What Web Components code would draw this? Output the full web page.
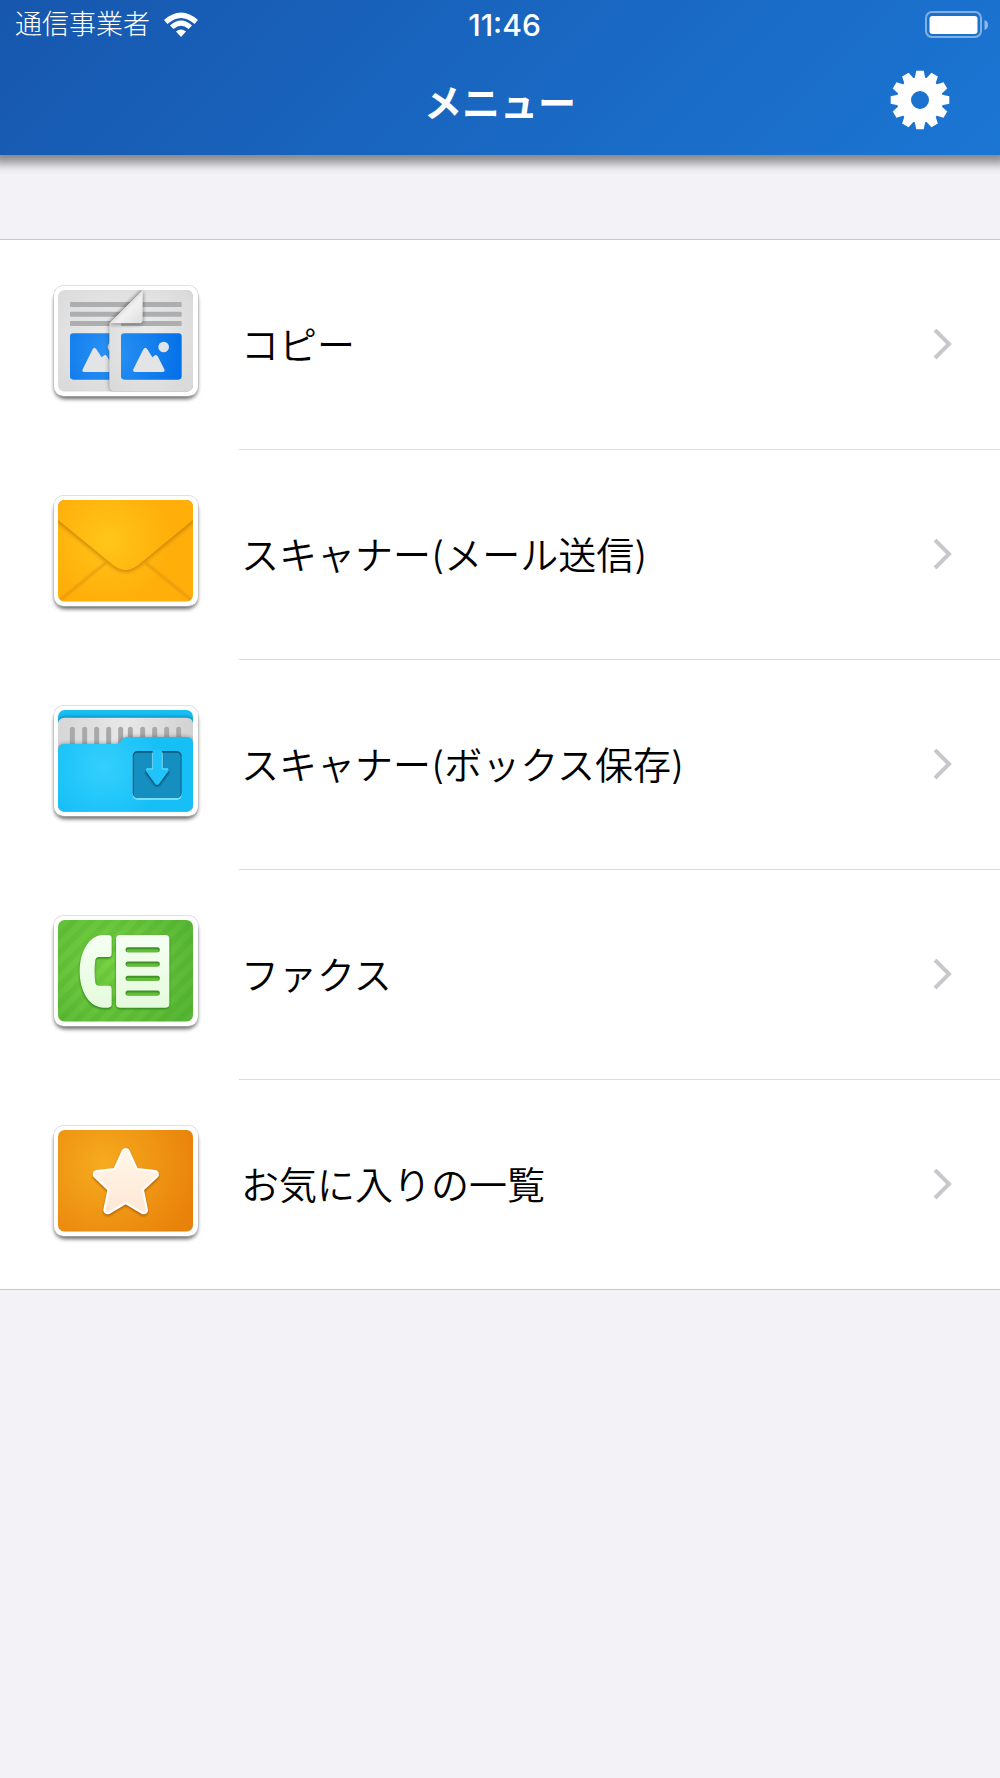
<!DOCTYPE html>
<html lang="ja">
<head>
<meta charset="utf-8">
<meta name="viewport" content="width=device-width, initial-scale=1">
<title>メニュー</title>
<style>
	body {
		margin: 0;
		min-height: 100vh;
		background: #f2f2f7;
		font-family: Inter, "Noto Sans CJK JP", sans-serif;
	}
</style>
</head>
<body>
<menu-app></menu-app>

<script>
// artwork of the tiles, drawn inside the 54,60 - 459,365 area
const ART = {
	copy: `
		<radialGradient id="paper" cx="45%" cy="45%" r="65%">
			<stop offset="0" stop-color="#ececec"/><stop offset="1" stop-color="#dadada"/>
		</radialGradient>
		<radialGradient id="blue" gradientUnits="userSpaceOnUse" cx="210" cy="250" r="220">
			<stop offset="0" stop-color="#2b94f5"/><stop offset="1" stop-color="#0470e8"/>
		</radialGradient>
		<linearGradient id="fold" x1="0" y1="0" x2="1" y2="1">
			<stop offset=".4" stop-color="#cfcfcf"/><stop offset=".6" stop-color="#f2f2f2"/><stop offset="1" stop-color="#dcdcdc"/>
		</linearGradient>
		<rect x="54" y="60" width="405" height="305" fill="url(#paper)"/>
		<g fill="#adaeb0">
			<rect x="90" y="96" width="200" height="15" rx="3"/>
			<rect x="90" y="125" width="200" height="15" rx="3"/>
			<rect x="90" y="153" width="200" height="15" rx="3"/>
		</g>
		<rect x="90" y="190" width="180" height="139" rx="10" fill="url(#blue)"/>
		<path d="M132 306 Q125 306 128 298 L158 238 Q163 229 169 238 L185 262 L193 256 Q198 253 202 260 L222 298 V306 Z" fill="#e3e4e6"/>
		<circle cx="219" cy="231" r="16" fill="#dfe4ea"/>
		<path d="M208 160 L308 60 H459 V365 H228 Q208 365 208 345 Z" fill="#222" filter="url(#soft)" opacity=".5"/>
		<path d="M208 160 L308 60 H459 V365 H228 Q208 365 208 345 Z" fill="url(#paper)"/>
		<g fill="#adaeb0">
			<rect x="300" y="96" width="125" height="15" rx="3"/>
			<rect x="300" y="125" width="125" height="15" rx="3"/>
			<rect x="243" y="153" width="182" height="15" rx="3"/>
		</g>
		<path d="M308 64 V151 Q308 162 297 162 H208 Z" fill="#222" filter="url(#soft)" opacity=".6"/>
		<path d="M308 60 V149 Q308 160 297 160 H208 Z" fill="url(#fold)"/>
		<rect x="243" y="190" width="182" height="139" rx="10" fill="url(#blue)"/>
		<path d="M285 306 Q277 306 280 298 L310 238 Q316 229 322 238 L337 262 L345 256 Q350 253 354 260 L373 298 Q376 306 368 306 Z" fill="#e3e4e6"/>
		<circle cx="371" cy="231" r="16" fill="#dfe4ea"/>`,
	mail: `
		<radialGradient id="mail" gradientUnits="userSpaceOnUse" cx="205" cy="180" r="190">
			<stop offset="0" stop-color="#ffc61a"/><stop offset="1" stop-color="#ffae0a"/>
		</radialGradient>
		<rect x="54" y="60" width="405" height="305" fill="url(#mail)"/>
		<path d="M198 248 L60 360 M316 248 L454 360" stroke="#dd920c" stroke-width="5" filter="url(#thin)"/>
		<path d="M50 124 L220 261 Q257 288 294 261 L463 124 V50 H50 Z" fill="#b87400" filter="url(#soft)" opacity=".8"/>
		<path d="M50 117 L220 256 Q257 284 294 256 L463 117 V50 H50 Z" fill="url(#mail)"/>`,
	box: `
		<radialGradient id="sky" gradientUnits="userSpaceOnUse" cx="190" cy="230" r="180">
			<stop offset="0" stop-color="#34d0fd"/><stop offset="1" stop-color="#17bff7"/>
		</radialGradient>
		<linearGradient id="sheet">
			<stop offset="0" stop-color="#d6d6d6"/><stop offset=".5" stop-color="#e8e8e8"/><stop offset="1" stop-color="#d2d2d2"/>
		</linearGradient>
		<rect x="54" y="60" width="405" height="305" fill="#19bff3"/>
		<path d="M54 365 V102 Q54 82 74 82 H439 Q459 82 459 102 V365 Z" fill="#075f80" filter="url(#soft)" opacity=".8"/>
		<path d="M54 365 V103 Q54 83 74 83 H439 Q459 83 459 103 V365 Z" fill="url(#sheet)"/>
		<path d="M97 118 V180 M134 118 V180 M170 118 V180 M206 118 V180 M242 118 V180 M271 118 V180 M308 118 V180 M344 118 V180 M380 118 V180 M416 118 V180" stroke="#a8a9ab" stroke-width="15" stroke-linecap="round"/>
		<path d="M54 365 V180 Q54 162 72 162 H225 Q236 162 243 152 Q250 141 264 141 H440 Q459 141 459 160 V365 Z" fill="#333" filter="url(#soft)" opacity=".45"/>
		<path d="M54 365 V180 Q54 162 72 162 H225 Q236 162 243 152 Q250 141 264 141 H440 Q459 141 459 160 V365 Z" fill="url(#sky)"/>
		<rect x="278" y="188" width="147" height="142" rx="15" fill="#7bdcfb"/>
		<rect x="278" y="183" width="147" height="141" rx="15" fill="#0c567b"/>
		<rect x="281" y="188" width="141" height="136" rx="12" fill="#158fc0"/>
		<path d="M338 188 V241 H323 Q313 242 319 251 L345 285 Q351 292 358 285 L384 251 Q390 242 380 241 H366 V188 Z" fill="#06384f" filter="url(#thin)"/>
		<path d="M338 180 V235 H323 Q313 236 319 245 L345 281 Q351 289 358 281 L384 245 Q390 236 380 235 H366 V180 Z" fill="#20c4fa"/>
		<path d="M337 188 V237 H320 M367 188 V237 H384" fill="none" stroke="#73dcfb" stroke-width="3"/>`,
	fax: `
		<radialGradient id="green" gradientUnits="userSpaceOnUse" cx="205" cy="185" r="260">
			<stop offset="0" stop-color="#76d241"/><stop offset="1" stop-color="#59b736"/>
		</radialGradient>
		<pattern id="stripes" width="36" height="36" patternUnits="userSpaceOnUse" patternTransform="rotate(45)">
			<rect width="18" height="36" fill="#2f8d1b" opacity=".12"/>
		</pattern>
		<linearGradient id="mint" x1="0" y1="0" x2="0" y2="1">
			<stop offset="0" stop-color="#f6fff3"/><stop offset="1" stop-color="#e4fbdc"/>
		</linearGradient>
		<rect x="54" y="60" width="405" height="305" fill="url(#green)"/>
		<rect x="54" y="60" width="405" height="305" fill="url(#stripes)"/>
		<g id="phone" fill="#1d6f0c" filter="url(#thin)" opacity=".8" transform="translate(0 4)">
			<path d="M205 105 H188 C145 107 119 158 119 214 C119 270 145 321 188 323 H205 Q215 323 215 313 V267 Q215 257 205 257 H177 Q168 257 166 248 C163 225 163 203 166 180 Q168 171 177 171 H205 Q215 171 215 161 V115 Q215 105 205 105 Z"/>
			<rect x="228" y="105" width="160" height="218" rx="12"/>
		</g>
		<g fill="url(#mint)">
			<path d="M205 105 H188 C145 107 119 158 119 214 C119 270 145 321 188 323 H205 Q215 323 215 313 V267 Q215 257 205 257 H177 Q168 257 166 248 C163 225 163 203 166 180 Q168 171 177 171 H205 Q215 171 215 161 V115 Q215 105 205 105 Z"/>
			<rect x="228" y="105" width="160" height="218" rx="12"/>
		</g>
		<path d="M264 149 H352 M264 192 H352 M264 235 H352 M264 279 H352" stroke="#3f9225" stroke-width="15" stroke-linecap="round"/>
		<path d="M264 152 H352 M264 195 H352 M264 238 H352 M264 282 H352" stroke="#63bf3b" stroke-width="9" stroke-linecap="round"/>`,
	star: `
		<radialGradient id="orange" gradientUnits="userSpaceOnUse" cx="190" cy="165" r="290">
			<stop offset="0" stop-color="#f6ab1f"/><stop offset="1" stop-color="#e9820a"/>
		</radialGradient>
		<linearGradient id="cream" x1="0" y1="0" x2="0" y2="1">
			<stop offset="0" stop-color="#fff6e8"/><stop offset="1" stop-color="#ffe8d6"/>
		</linearGradient>
		<rect x="54" y="60" width="405" height="305" fill="url(#orange)"/>
		<g stroke-linejoin="round">
			<path d="M257 132 L284 191 L344 198 L298 241 L311 305 L257 273 L203 305 L216 241 L171 198 L230 191 Z" fill="#9a4e00" stroke="#9a4e00" stroke-width="26" filter="url(#thin)" opacity=".7"/>
			<path d="M257 127 L284 186 L344 193 L298 236 L311 300 L257 268 L203 300 L216 236 L171 193 L230 186 Z" fill="#fff" stroke="#fff" stroke-width="26"/>
			<path d="M257 127 L284 186 L344 193 L298 236 L311 300 L257 268 L203 300 L216 236 L171 193 L230 186 Z" fill="url(#cream)" stroke="url(#cream)" stroke-width="13"/>
		</g>`,
};

class TileIcon extends HTMLElement {
	constructor() {
		super();
		this.attachShadow({ mode: "open" });
	}

	connectedCallback() {
		this.shadowRoot.innerHTML = `
			<style>
				:host { display: block; flex: none; }
				svg { display: block; }
			</style>
			<svg width="152" height="130" viewBox="30 30 456 390" aria-hidden="true">
				<defs>
					<clipPath id="inner"><rect x="54" y="60" width="405" height="305" rx="20"/></clipPath>
					<filter id="soft"><feGaussianBlur stdDeviation="7"/></filter>
					<filter id="thin"><feGaussianBlur stdDeviation="3"/></filter>
				</defs>
				<rect x="44" y="62" width="428" height="324" rx="30" fill="#000" opacity=".65" filter="url(#soft)"/>
				<rect x="40" y="45" width="436" height="336" rx="31" fill="#bbb" opacity=".6"/>
				<rect x="42" y="47" width="432" height="331" rx="29" fill="#fff"/>
				<g clip-path="url(#inner)">${ART[this.getAttribute("name")]}</g>
			</svg>`;
	}
}
customElements.define("tile-icon", TileIcon);

class StatusBar extends HTMLElement {
	constructor() {
		super();
		this.attachShadow({ mode: "open" }).innerHTML = `
			<style>
				:host {
					display: grid;
					grid-template-columns: 1fr auto 1fr;
					align-items: center;
					height: 50px;
					padding: 0 12px 0 15px;
					color: white;
				}
				.carrier {
					display: flex;
					align-items: center;
					gap: 14px;
					font-size: 27px;
					line-height: 50px;
					font-weight: 300;
				}
				time { font-size: 30px; line-height: 50px; font-weight: 500; padding-left: 6px; }
				.battery { justify-self: end; }
				svg { display: block; }
			</style>
			<div class="carrier">
				<slot></slot>
				<svg width="34" height="26" viewBox="0 0 34 26" aria-hidden="true">
					<path d="M0 8 Q17 -7 34 8 L30.500 12 Q17 0 3.500 12 Z" fill="#fff"/>
					<path d="M6 13.500 Q17 3.500 28 13.500 L24.500 17 Q17 10.500 9.500 17 Z" fill="#fff"/>
					<path d="M12 19.500 Q17 15.500 22 19.500 L17 25 Z" fill="#fff"/>
				</svg>
			</div>
			<time>11:46</time>
			<svg class="battery" width="63" height="28" viewBox="0 0 63 28" aria-hidden="true">
				<rect x="1" y="1" width="55" height="25" rx="6" fill="none" stroke="#fff" stroke-width="2" opacity=".45"/>
				<rect x="4.500" y="5" width="48" height="18" rx="3" fill="#fff"/>
				<path d="M59.500 9 Q63 10 63 14 Q63 18 59.500 19 Z" fill="#fff" opacity=".5"/>
			</svg>`;
	}
}
customElements.define("status-bar", StatusBar);

class GearButton extends HTMLElement {
	constructor() {
		super();

		let teeth = "";
		for (let angle = 0; angle < 360; angle += 30) {
			teeth += `<path d="M-5.500 -21 L-3.700 -29.300 H3.700 L5.500 -21 Z" transform="rotate(${angle})"/>`;
		}

		this.attachShadow({ mode: "open" }).innerHTML = `
			<style>
				:host { display: block; }
				button {
					display: block;
					padding: 0;
					border: 0;
					background: none;
					cursor: pointer;
				}
				svg { display: block; }
			</style>
			<button type="button" aria-label="設定">
				<svg width="60" height="60" viewBox="-30 -30 60 60" fill="#fff" aria-hidden="true">
					${teeth}
					<circle r="16" fill="none" stroke="#fff" stroke-width="14"/>
				</svg>
			</button>`;
	}
}
customElements.define("gear-button", GearButton);

class AppHeader extends HTMLElement {
	constructor() {
		super();
		this.attachShadow({ mode: "open" }).innerHTML = `
			<style>
				:host {
					display: block;
					background: linear-gradient(135deg, #1757ae, #1b76d3);
					box-shadow: 0 0 10px 8px rgba(0, 0, 0, .45);
				}
				.bar {
					display: grid;
					grid-template-columns: 1fr auto 1fr;
					align-items: start;
					height: 105px;
					padding: 20px 50px 0;
					box-sizing: border-box;
				}
				h1 {
					grid-column: 2;
					margin: 0;
					color: white;
					font-size: 38px;
					line-height: 66px;
					font-weight: 700;
				}
				gear-button { justify-self: end; }
			</style>
			<status-bar>通信事業者</status-bar>
			<div class="bar">
				<h1><slot></slot></h1>
				<gear-button></gear-button>
			</div>`;
	}
}
customElements.define("app-header", AppHeader);

class MenuRow extends HTMLElement {
	constructor() {
		super();
		this.attachShadow({ mode: "open" });
	}

	connectedCallback() {
		this.shadowRoot.innerHTML = `
			<style>
				:host { display: block; }
				a {
					display: flex;
					gap: 37px;
					padding-left: 50px;
					color: black;
					text-decoration: none;
				}
				tile-icon { align-self: center; }
				.content {
					flex: 1;
					display: flex;
					align-items: center;
					justify-content: space-between;
					height: 209px;
					padding: 0 47px 0 2px;
					border-bottom: 1px solid #dcdcde;
				}
				:host(:last-of-type) .content { border-color: transparent; }
				.label { font-size: 38px; line-height: 56px; font-weight: 350; }
				svg { display: block; }
			</style>
			<a href="#${this.getAttribute("icon")}">
				<tile-icon name="${this.getAttribute("icon")}"></tile-icon>
				<span class="content">
					<span class="label"><slot></slot></span>
					<svg width="20" height="32" viewBox="0 0 20 32" aria-hidden="true">
						<path d="M2 1 L16 15 L2 29" fill="none" stroke="#c7c7cc" stroke-width="4"/>
					</svg>
				</span>
			</a>`;
	}
}
customElements.define("menu-row", MenuRow);

class MenuList extends HTMLElement {
	constructor() {
		super();
		this.attachShadow({ mode: "open" }).innerHTML = `
			<style>
				:host {
					display: block;
					margin-top: 84px;
					background: white;
					border-top: 1px solid #c8c7cc;
					box-shadow: inset 0 -1px #c8c7cc;
				}
			</style>
			<nav><slot></slot></nav>`;
	}
}
customElements.define("menu-list", MenuList);

class MenuApp extends HTMLElement {
	constructor() {
		super();
		this.attachShadow({ mode: "open" }).innerHTML = `
			<style>
				:host { display: block; }
			</style>
			<app-header>メニュー</app-header>
			<menu-list>
				<menu-row icon="copy">コピー</menu-row>
				<menu-row icon="mail">スキャナー(メール送信)</menu-row>
				<menu-row icon="box">スキャナー(ボックス保存)</menu-row>
				<menu-row icon="fax">ファクス</menu-row>
				<menu-row icon="star">お気に入りの一覧</menu-row>
			</menu-list>`;
	}
}
customElements.define("menu-app", MenuApp);
</script>
</body>
</html>
